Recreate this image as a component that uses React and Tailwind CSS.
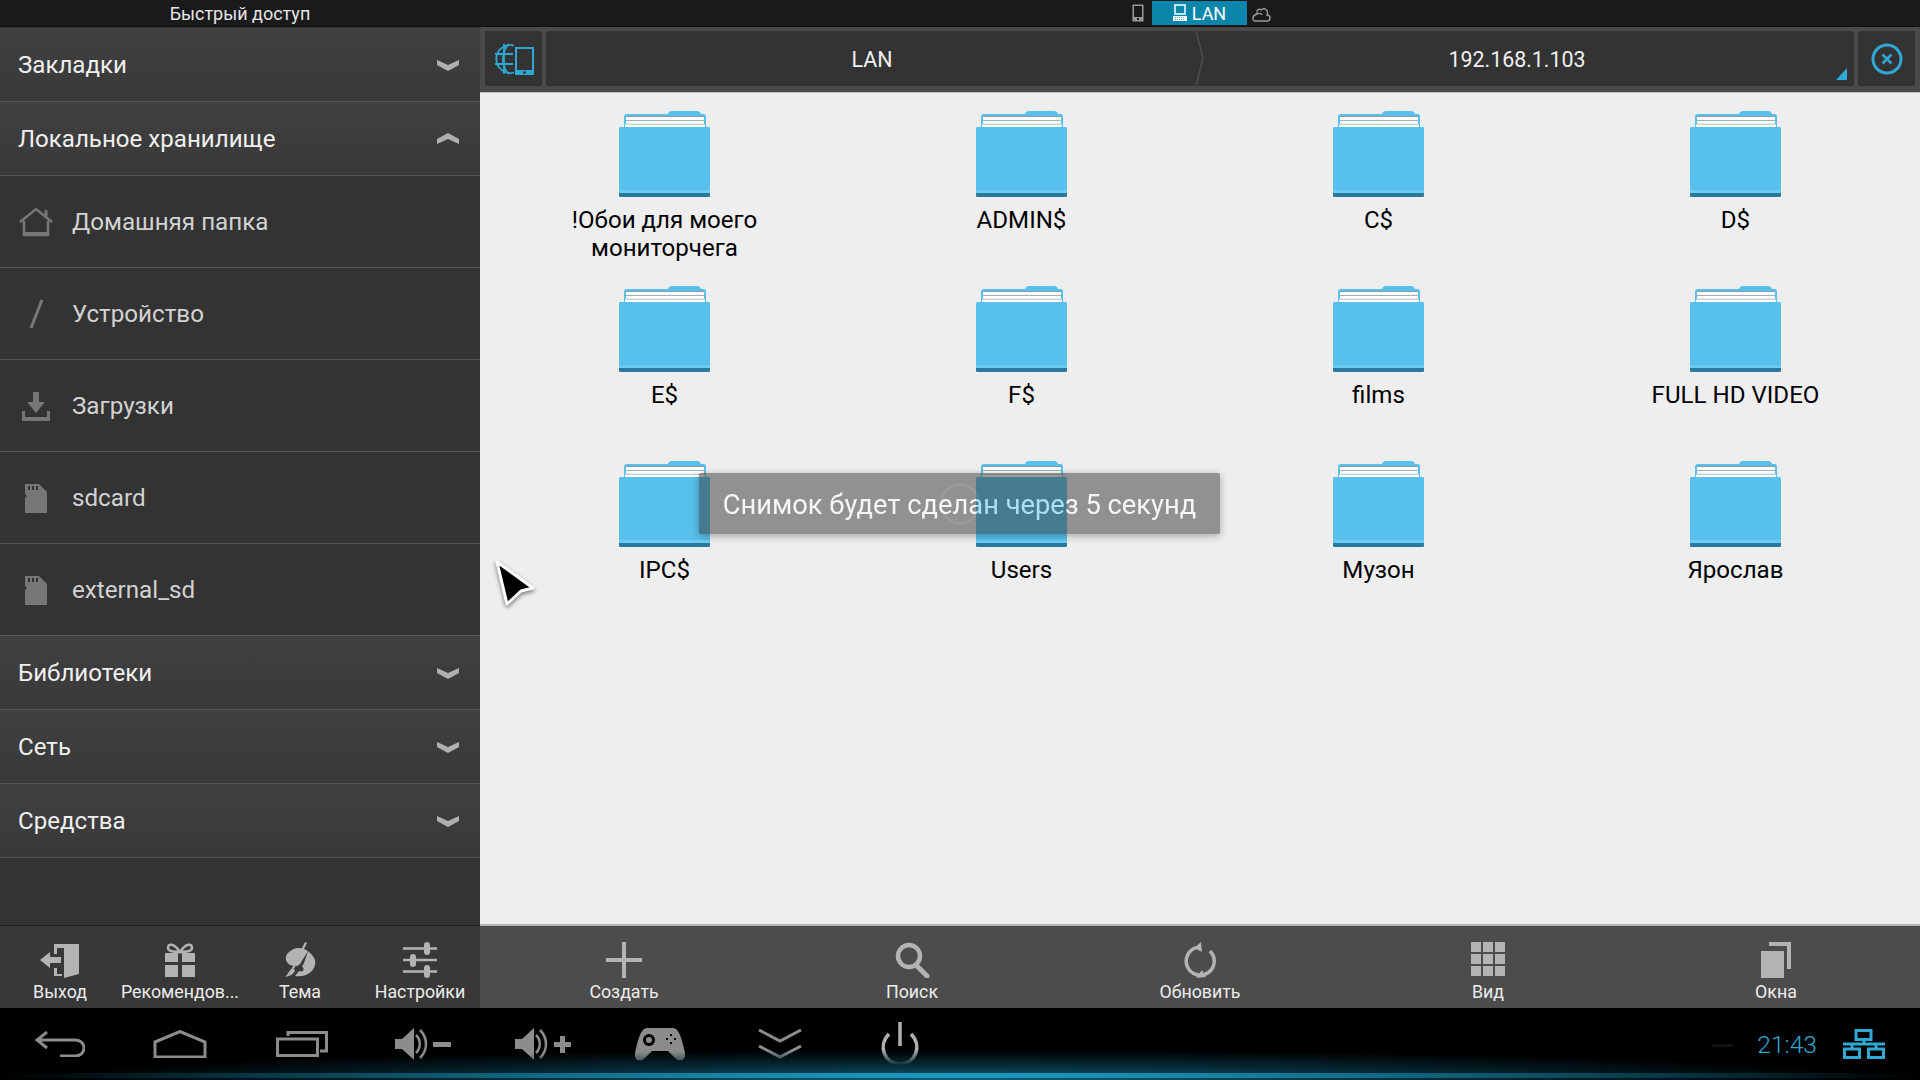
import React from 'react';

const Chevron = ({ up }) => (
  <svg viewBox="0 0 22 12" className="w-[22px] h-[12px]">
    <path d={up ? 'M0 6 L11 0 L22 6 L22 11 L11 6 L0 11 Z' : 'M0 1 L11 6 L22 1 L22 6 L11 12 L0 6 Z'} fill="#b0b0b0" />
  </svg>
);

const HomeIcon = () => (
  <svg viewBox="0 0 36 30" className="w-[36px] h-[30px]">
    <path d="M2 15 L18 2 L34 15" fill="none" stroke="#777" strokeWidth="2.5" />
    <path d="M28 3 V10" stroke="#777" strokeWidth="3" />
    <path d="M6 14 V28 H30 V14" fill="none" stroke="#777" strokeWidth="2.5" />
    <rect x="6" y="25" width="24" height="4" fill="#777" />
  </svg>
);

const SlashIcon = () => (
  <svg viewBox="0 0 36 30" className="w-[36px] h-[30px]">
    <path d="M24 1 L13 29" stroke="#777" strokeWidth="3" />
  </svg>
);

const DownloadIcon = () => (
  <svg viewBox="0 0 36 30" className="w-[36px] h-[30px]">
    <path d="M15 1 H21 V11 H27 L18 22 L9 11 H15 Z" fill="#777" />
    <path d="M4 20 H7 V26 H29 V20 H32 V30 H4 Z" fill="#777" />
  </svg>
);

const SdIcon = () => (
  <svg viewBox="0 0 36 30" className="w-[36px] h-[30px]">
    <path d="M7 1 H21 L29 9 V30 H7 V15 L9 13 L7 11 Z" fill="#777" />
    <path d="M10 3 H12 V7 H10 Z M14 3 H16 V7 H14 Z M18 3 H20 V7 H18 Z" fill="#333" />
  </svg>
);

const ExitIcon = () => (
  <svg viewBox="0 0 40 36" className="w-[40px] h-[36px]">
    <path d="M14 2 H39 V32 L24 36 V6 H17 V12 H14 Z" fill="#b3b3b3" />
    <path d="M14 26 H17 V32 H22 V34 H14 Z" fill="#b3b3b3" />
    <path d="M0 18 L10 10 V15 H21 V21 H10 V26 Z" fill="#b3b3b3" />
  </svg>
);

const GiftIcon = () => (
  <svg viewBox="0 0 32 36" className="w-[32px] h-[36px]">
    <path d="M16 10 C10 1 4 1 4 6 C4 9 10 10 16 10 C22 10 28 9 28 6 C28 1 22 1 16 10 Z" fill="none" stroke="#b3b3b3" strokeWidth="2.5" />
    <rect x="1" y="11" width="13" height="9" fill="#b3b3b3" />
    <rect x="18" y="11" width="13" height="9" fill="#b3b3b3" />
    <rect x="1" y="23" width="13" height="12" fill="#b3b3b3" />
    <rect x="18" y="23" width="13" height="12" fill="#b3b3b3" />
  </svg>
);

const PaletteIcon = () => (
  <svg viewBox="0 0 32 36" className="w-[32px] h-[36px]">
    <path d="M8 8 C15 3 27 8 31 18 C33 28 23 36 11 34 C14 30 17 27 20 21 L24 9 L16 22 C13 25 10 24 6 23 C0 19 0 12 8 8 Z" fill="#b3b3b3" />
    <path d="M21 0 L23 1 L10 27 L8 26 Z" fill="#b3b3b3" />
    <path d="M8 26 L11 28 C10 32 6 34 1 35 C4 32 5 29 8 26 Z" fill="#b3b3b3" />
    <circle cx="17" cy="27" r="2.5" fill="#383838" />
  </svg>
);

const SlidersIcon = () => (
  <svg viewBox="0 0 36 36" className="w-[36px] h-[36px]">
    <path d="M1 6.5 H35 M1 18 H35 M1 29.5 H35" stroke="#b3b3b3" strokeWidth="2.5" />
    <rect x="22" y="0" width="6" height="13" rx="3" fill="#b3b3b3" />
    <rect x="8" y="12" width="6" height="13" rx="3" fill="#b3b3b3" />
    <rect x="22" y="23" width="6" height="13" rx="3" fill="#b3b3b3" />
  </svg>
);

const PlusIcon = () => (
  <svg viewBox="0 0 36 36" className="w-[36px] h-[36px]">
    <path d="M16 0 H20 V16 H36 V20 H20 V36 H16 V20 H0 V16 H16 Z" fill="#b3b3b3" />
  </svg>
);

const SearchIcon = () => (
  <svg viewBox="0 0 36 36" className="w-[36px] h-[36px]">
    <circle cx="15" cy="14" r="11" fill="none" stroke="#b3b3b3" strokeWidth="4.5" />
    <path d="M22 23 L33 34" stroke="#b3b3b3" strokeWidth="5" strokeLinecap="round" />
  </svg>
);

const RefreshIcon = () => (
  <svg viewBox="0 0 36 36" className="w-[36px] h-[36px]">
    <path d="M11 7 A14 14 0 1 0 25 7" fill="none" stroke="#b3b3b3" strokeWidth="3.5" transform="rotate(14 18 20)" />
    <path d="M12 6 L19 0 L20 10 Z" fill="#b3b3b3" />
    <path d="M14 36 L20 28 L24 35 Z" fill="#b3b3b3" />
  </svg>
);

const GridIcon = () => (
  <svg viewBox="0 0 34 36" className="w-[34px] h-[36px]">
    {[0, 12, 24].flatMap((y) =>
      [0, 12, 24].map((x) => <rect key={`${x}-${y}`} x={x} y={y} width="10" height="10" fill="#b3b3b3" />)
    )}
  </svg>
);

const WindowsIcon = () => (
  <svg viewBox="0 0 32 36" className="w-[32px] h-[36px]">
    <path d="M9 0 H31 V27 H27 V4 H9 Z" fill="#b3b3b3" />
    <path d="M1 9 H24 V36 H1 Z" fill="#b3b3b3" />
  </svg>
);

const BackIcon = () => (
  <svg viewBox="0 0 50 26" className="w-[50px] h-[26px]">
    <path d="M12 1 L2 9 L12 17 M2 9 H40 C52 9 52 25 40 25 H25" fill="none" stroke="#8c8c8c" strokeWidth="3" />
  </svg>
);

const NavHomeIcon = () => (
  <svg viewBox="0 0 54 28" className="w-[54px] h-[28px]">
    <path d="M2 12 L27 1.5 L52 12 V27 H2 Z" fill="none" stroke="#8c8c8c" strokeWidth="3" />
  </svg>
);

const RecentIcon = () => (
  <svg viewBox="0 0 52 26" className="w-[52px] h-[26px]">
    <path d="M12 5 V1.5 H50.5 V20 H44" fill="none" stroke="#8c8c8c" strokeWidth="3" />
    <rect x="1.5" y="8" width="40" height="16.5" fill="none" stroke="#8c8c8c" strokeWidth="3" />
  </svg>
);

const VolumeIcon = ({ plus }) => (
  <svg viewBox="0 0 56 32" className="w-[56px] h-[32px]">
    <path d="M0 11 H7 L19 0 V32 L7 21 H0 Z" fill="#8c8c8c" />
    <path d="M21 7 C26 12 26 20 21 25" fill="none" stroke="#8c8c8c" strokeWidth="2.5" />
    <path d="M25 2 C33 10 33 22 25 30" fill="none" stroke="#8c8c8c" strokeWidth="2.5" />
    {plus ? (
      <path d="M39 14 H45 V8 H50 V14 H56 V19 H50 V25 H45 V19 H39 Z" fill="#8c8c8c" />
    ) : (
      <rect x="38" y="14" width="18" height="5" fill="#8c8c8c" />
    )}
  </svg>
);

const GamepadIcon = () => (
  <svg viewBox="0 0 50 34" className="w-[50px] h-[34px]">
    <path d="M12 1 H38 C44 1 47 12 50 26 C51 33 45 36 40 31 L33 24 H17 L10 31 C5 36 -1 33 0 26 C3 12 6 1 12 1 Z" fill="#8c8c8c" />
    <circle cx="14" cy="13" r="6" fill="#000" />
    <circle cx="14" cy="13" r="3" fill="#8c8c8c" />
    <path d="M35 7 h2 v2 h-2 z M35 15 h2 v2 h-2 z M31 11 h2 v2 h-2 z M39 11 h2 v2 h-2 z" fill="#000" />
  </svg>
);

const DoubleChevronIcon = () => (
  <svg viewBox="0 0 44 30" className="w-[44px] h-[30px]">
    <path d="M1 1 L22 12 L43 1 M1 17 L22 28 L43 17" fill="none" stroke="#8c8c8c" strokeWidth="3" />
  </svg>
);

const PowerIcon = () => (
  <svg viewBox="0 0 42 44" className="w-[42px] h-[44px]">
    <path d="M10 12 C-2 24 6 42 21 42 C36 42 44 24 32 12" fill="none" stroke="#b0b0b0" strokeWidth="3.5" />
    <path d="M21 0 V24" stroke="#b0b0b0" strokeWidth="3.5" />
  </svg>
);

const Folder = () => (
  <svg viewBox="0 0 91 87" className="w-[91px] h-[87px]">
    <path d="M49 3 Q50 0 53 0 H78 Q81 0 82 3 H85 Q87 3 87 6 V20 H5 V6 Q5 3 8 3 Z" fill="#58c0ec" />
    <rect x="7" y="5" width="78" height="12" fill="#8d9ca3" />
    <rect x="7" y="6" width="78" height="3.2" fill="#ffffff" />
    <rect x="7" y="10" width="78" height="2.8" fill="#ffffff" />
    <rect x="6" y="13.5" width="80" height="3.5" fill="#ffffff" />
    <path d="M1 16 H90 Q91 16 91 18 V85 Q91 86 89 86 H2 Q0 86 0 85 V18 Q0 16 1 16 Z" fill="#58c0ec" />
    <rect x="0" y="79" width="91" height="3" fill="#6ccbf1" />
    <path d="M0 82 H91 V85 Q91 86 89 86 H2 Q0 86 0 85 Z" fill="#2b7a9e" />
  </svg>
);

const sections = [
  { label: 'Закладки', up: false },
  { label: 'Локальное хранилище', up: true },
];

const storageItems = [
  { label: 'Домашняя папка', icon: <HomeIcon /> },
  { label: 'Устройство', icon: <SlashIcon /> },
  { label: 'Загрузки', icon: <DownloadIcon /> },
  { label: 'sdcard', icon: <SdIcon /> },
  { label: 'external_sd', icon: <SdIcon /> },
];

const lowerSections = ['Библиотеки', 'Сеть', 'Средства'];

const leftTools = [
  { label: 'Выход', icon: <ExitIcon /> },
  { label: 'Рекомендов...', icon: <GiftIcon /> },
  { label: 'Тема', icon: <PaletteIcon /> },
  { label: 'Настройки', icon: <SlidersIcon /> },
];

const rightTools = [
  { label: 'Создать', icon: <PlusIcon /> },
  { label: 'Поиск', icon: <SearchIcon /> },
  { label: 'Обновить', icon: <RefreshIcon /> },
  { label: 'Вид', icon: <GridIcon /> },
  { label: 'Окна', icon: <WindowsIcon /> },
];

const folders = ['!Обои для моего мониторчега', 'ADMIN$', 'C$', 'D$', 'E$', 'F$', 'films', 'FULL HD VIDEO', 'IPC$', 'Users', 'Музон', 'Ярослав'];

const navIcons = [
  { icon: <BackIcon />, cls: '' },
  { icon: <NavHomeIcon />, cls: '' },
  { icon: <RecentIcon />, cls: 'pl-[4px]' },
  { icon: <VolumeIcon />, cls: 'pl-[5px]' },
  { icon: <VolumeIcon plus />, cls: 'pl-[5px]' },
  { icon: <GamepadIcon />, cls: '' },
  { icon: <DoubleChevronIcon />, cls: '' },
  { icon: <PowerIcon />, cls: '' },
];

const SectionRow = ({ label, up, className }) => (
  <div className={`flex items-center justify-between pl-[18px] pr-[21px] bg-gradient-to-b from-[#404040] to-[#393939] border-b border-b-[#555] ${className}`}>
    <span className="pt-[2px] text-[24.1px] text-[#efefef]">{label}</span>
    <Chevron up={up} />
  </div>
);

const ToolButton = ({ label, icon }) => (
  <div className="flex-1 flex flex-col items-center pt-[16px]">
    <div className="h-[36px] flex items-center justify-center">{icon}</div>
    <span className="mt-[2px] text-[17.8px] leading-[24px] text-[#ececec] whitespace-nowrap">{label}</span>
  </div>
);

export default function App() {
  return (
    <div className="relative w-[1920px] h-[1080px] overflow-hidden flex flex-col font-['Roboto',sans-serif] bg-black">
      {/* Top strip */}
      <div className="h-[27px] shrink-0 flex bg-[#1a1a1a] border-b border-b-[#111]">
        <div className="w-[480px] flex items-center justify-center text-[18px] text-[#e6e6e6]">Быстрый доступ</div>
        <div className="flex-1 flex items-start justify-center pl-[3px]">
          <svg viewBox="0 0 12 18" className="w-[12px] h-[18px] mt-[4px] mr-[8px]">
            <rect x="0.5" y="0.5" width="11" height="17" fill="#999" />
            <rect x="2" y="2" width="8" height="11" fill="#1a1a1a" />
            <rect x="5" y="14" width="2" height="2" fill="#1a1a1a" />
          </svg>
          <div className="w-[95px] h-[24px] mt-[1px] bg-[#0a86ab] flex items-center justify-center gap-[5px] text-[18px] text-white">
            <svg viewBox="0 0 14 18" className="w-[14px] h-[18px]">
              <rect x="2" y="1" width="10" height="9" fill="none" stroke="#fff" strokeWidth="1.5" />
              <rect x="0" y="12" width="14" height="5" fill="#fff" />
              <path d="M2 13.5 H12 M2 15.5 H12" stroke="#0a86ab" strokeWidth="0.7" strokeDasharray="1 1" />
            </svg>
            LAN
          </div>
          <svg viewBox="0 0 20 18" className="w-[20px] h-[18px] mt-[5px] ml-[4px]">
            <path d="M4 16 H16 C20 16 20 10 16 10 C18 5 13 2 10 5 C8 3 5 5 6 9 C1 10 1 16 4 16 Z M6 9 C8 8 10 8 11 10" fill="none" stroke="#999" strokeWidth="1.4" />
          </svg>
        </div>
      </div>

      <div className="flex-1 flex min-h-0">
        {/* Sidebar */}
        <div className="w-[480px] shrink-0 flex flex-col bg-[#333333]">
          <div className="flex-1 flex flex-col pt-[1px] border-b border-b-[#222]">
            {sections.map((s) => (
              <SectionRow key={s.label} label={s.label} up={s.up} className="h-[74px]" />
            ))}
            {storageItems.map((item) => (
              <div key={item.label} className="h-[92px] flex items-center pl-[18px] border-b border-b-[#555]">
                <div className="w-[36px] flex items-center justify-center">{item.icon}</div>
                <span className="ml-[18px] pt-[2px] text-[24.2px] text-[#d2d2d2]">{item.label}</span>
              </div>
            ))}
            {lowerSections.map((label) => (
              <SectionRow key={label} label={label} className="h-[74px]" />
            ))}
          </div>
          <div className="h-[82px] shrink-0 flex bg-[#383838]">
            {leftTools.map((t) => (
              <ToolButton key={t.label} label={t.label} icon={t.icon} />
            ))}
          </div>
        </div>

        {/* Main pane */}
        <div className="flex-1 flex flex-col min-w-0">
          <div className="h-[65px] shrink-0 flex gap-[4px] px-[5px] pt-[4px] pb-[6px] bg-[#4a4a4a]">
            <div className="w-[57px] flex items-center justify-center rounded-[2px] bg-[#333333]">
              <svg viewBox="0 0 40 32" className="w-[40px] h-[32px]">
                <g fill="none" stroke="#2fa8d5" strokeWidth="1.8">
                  <path d="M20 2.5 A14 14 0 1 0 20 29.5" />
                  <path d="M15 1 C7 8 7 24 15 31" />
                  <path d="M1 11 H19 M1 21 H19 M10 1 V31" />
                </g>
                <path d="M21 4 H40 V32 H21 Z" fill="#2fa8d5" />
                <rect x="23" y="6" width="15" height="21" fill="#333" />
                <rect x="29" y="28.5" width="3" height="2" fill="#333" />
              </svg>
            </div>
            <div className="relative flex-1 flex rounded-[2px] bg-[#333333] text-[21.4px] text-[#efefef]">
              <div className="w-[652px] flex items-center justify-center pt-[4px]">LAN</div>
              <svg viewBox="0 0 8 55" className="w-[8px] h-[55px] shrink-0 -ml-[2px]">
                <path d="M0 0 L7 27 L0 55" fill="none" stroke="#4e4e4e" strokeWidth="1.5" />
              </svg>
              <div className="flex-1 flex items-center justify-center pr-[24px] pt-[4px]">192.168.1.103</div>
              <svg viewBox="0 0 11 12" className="absolute right-[7px] bottom-[6px] w-[11px] h-[12px]">
                <path d="M11 0 V12 H0 Z" fill="#2fa8d5" />
              </svg>
            </div>
            <div className="w-[57px] flex items-center justify-center rounded-[2px] bg-[#333333]">
              <svg viewBox="0 0 32 32" className="w-[32px] h-[32px]">
                <circle cx="16" cy="16" r="14" fill="none" stroke="#2fa8d5" strokeWidth="3" />
                <path d="M11.5 11.5 L20.5 20.5 M20.5 11.5 L11.5 20.5" stroke="#2fa8d5" strokeWidth="2.5" />
              </svg>
            </div>
          </div>

          <div className="flex-1 bg-[#eeeeee] border-t border-t-[#bdbdbd] border-b-2 border-b-[#b5b5b5] px-[6px]">
            <div className="grid grid-cols-4 auto-rows-[175px]">
              {folders.map((name) => (
                <div key={name} className="flex flex-col items-center pt-[18px]">
                  <Folder />
                  <div className="mt-[8px] w-[230px] text-center text-[24.1px] leading-[28px] text-black">{name}</div>
                </div>
              ))}
            </div>
          </div>

          <div className="h-[82px] shrink-0 flex bg-[#4c4c4c]">
            {rightTools.map((t) => (
              <ToolButton key={t.label} label={t.label} icon={t.icon} />
            ))}
          </div>
        </div>
      </div>

      {/* Android nav bar */}
      <div className="relative h-[72px] shrink-0 flex items-center bg-black">
        <div className="flex">
          {navIcons.map((n, i) => (
            <div key={i} className={`w-[120px] flex items-center justify-center ${n.cls}`}>{n.icon}</div>
          ))}
        </div>
        <div className="ml-auto flex items-center pr-[35px]">
          <div className="w-[21px] h-[3px] bg-[#111] mt-[4px]" />
          <span className="ml-[24px] pt-[3px] text-[24.6px] font-light text-[#2fa8d5]">21:43</span>
          <svg viewBox="0 0 42 30" className="ml-[26px] w-[42px] h-[30px]">
            <g fill="none" stroke="#2fa8d5" strokeWidth="3">
              <rect x="13" y="1.5" width="15" height="9" />
              <rect x="1.5" y="20" width="15" height="8.5" />
              <rect x="25.5" y="20" width="15" height="8.5" />
              <path d="M21 10 V15 M0 15 H42 M9 15 V20 M33 15 V20" />
            </g>
          </svg>
        </div>
        <div className="absolute left-0 right-0 bottom-0 h-[30px] bg-[radial-gradient(ellipse_48%_100%_at_50%_100%,#0f6078_0%,#062a37_50%,transparent_100%)] pointer-events-none" />
        <div className="absolute left-0 right-0 bottom-[2px] h-[5px] bg-gradient-to-r from-transparent via-[#1c9abd] to-transparent" />
      </div>

      {/* Toast */}
      <div className="absolute left-[699px] top-[473px] w-[521px] h-[61px] flex items-center justify-center rounded-[2px] bg-[#363636] opacity-50 shadow-[0_2px_8px_rgba(0,0,0,0.6)] pt-[4px] text-[27.3px] text-white">
        <div className="absolute left-[241px] top-[11px] w-[40px] h-[40px] rounded-full border-2 border-white/10" />
        <span className="relative">Снимок будет сделан через 5 секунд</span>
      </div>

      {/* Mouse pointer */}
      <svg viewBox="0 0 42 48" className="absolute left-[494px] top-[559px] w-[42px] h-[48px] drop-shadow-[0_2px_2px_rgba(0,0,0,0.5)]">
        <path d="M3 3 L39 29 L27 32 L13 45 Z" fill="#000" stroke="#fff" strokeWidth="3" strokeLinejoin="round" />
      </svg>
    </div>
  );
}
